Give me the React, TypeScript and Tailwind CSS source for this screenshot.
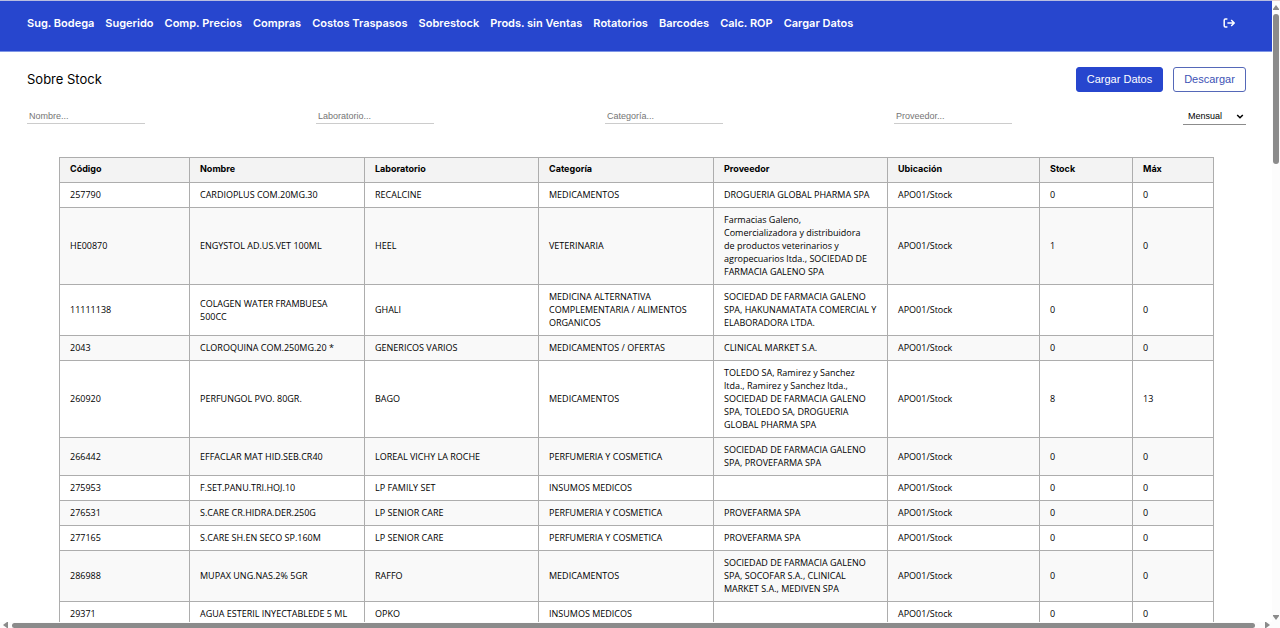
import React from "react";

const navItems = [
  "Sug. Bodega",
  "Sugerido",
  "Comp. Precios",
  "Compras",
  "Costos Traspasos",
  "Sobrestock",
  "Prods. sin Ventas",
  "Rotatorios",
  "Barcodes",
  "Calc. ROP",
  "Cargar Datos",
];

const filters = ["Nombre", "Laboratorio", "Categoría", "Proveedor"];

const columns = [
  { label: "Código", width: "w-[130px]" },
  { label: "Nombre", width: "w-[175px]" },
  { label: "Laboratorio", width: "w-[174px]" },
  { label: "Categoría", width: "w-[175px]" },
  { label: "Proveedor", width: "w-[174px]" },
  { label: "Ubicación", width: "w-[152px]" },
  { label: "Stock", width: "w-[93px]" },
  { label: "Máx", width: "w-[81px]" },
];

const rows = [
  ["257790", "CARDIOPLUS COM.20MG.30", "RECALCINE", "MEDICAMENTOS", "DROGUERIA GLOBAL PHARMA SPA", "APO01/Stock", "0", "0"],
  ["HE00870", "ENGYSTOL AD.US.VET 100ML", "HEEL", "VETERINARIA", "Farmacias Galeno,\nComercializadora y distribuidora\nde productos veterinarios y\nagropecuarios ltda., SOCIEDAD DE\nFARMACIA GALENO SPA", "APO01/Stock", "1", "0"],
  ["11111138", "COLAGEN WATER FRAMBUESA\n500CC", "GHALI", "MEDICINA ALTERNATIVA\nCOMPLEMENTARIA / ALIMENTOS\nORGANICOS", "SOCIEDAD DE FARMACIA GALENO\nSPA, HAKUNAMATATA COMERCIAL Y\nELABORADORA LTDA.", "APO01/Stock", "0", "0"],
  ["2043", "CLOROQUINA COM.250MG.20 *", "GENERICOS VARIOS", "MEDICAMENTOS / OFERTAS", "CLINICAL MARKET S.A.", "APO01/Stock", "0", "0"],
  ["260920", "PERFUNGOL PVO. 80GR.", "BAGO", "MEDICAMENTOS", "TOLEDO SA, Ramirez y Sanchez\nltda., Ramirez y Sanchez ltda.,\nSOCIEDAD DE FARMACIA GALENO\nSPA, TOLEDO SA, DROGUERIA\nGLOBAL PHARMA SPA", "APO01/Stock", "8", "13"],
  ["266442", "EFFACLAR MAT HID.SEB.CR40", "LOREAL VICHY LA ROCHE", "PERFUMERIA Y COSMETICA", "SOCIEDAD DE FARMACIA GALENO\nSPA, PROVEFARMA SPA", "APO01/Stock", "0", "0"],
  ["275953", "F.SET.PANU.TRI.HOJ.10", "LP FAMILY SET", "INSUMOS MEDICOS", "", "APO01/Stock", "0", "0"],
  ["276531", "S.CARE CR.HIDRA.DER.250G", "LP SENIOR CARE", "PERFUMERIA Y COSMETICA", "PROVEFARMA SPA", "APO01/Stock", "0", "0"],
  ["277165", "S.CARE SH.EN SECO SP.160M", "LP SENIOR CARE", "PERFUMERIA Y COSMETICA", "PROVEFARMA SPA", "APO01/Stock", "0", "0"],
  ["286988", "MUPAX UNG.NAS.2% 5GR", "RAFFO", "MEDICAMENTOS", "SOCIEDAD DE FARMACIA GALENO\nSPA, SOCOFAR S.A., CLINICAL\nMARKET S.A., MEDIVEN SPA", "APO01/Stock", "0", "0"],
  ["29371", "AGUA ESTERIL INYECTABLEDE 5 ML", "OPKO", "INSUMOS MEDICOS", "", "APO01/Stock", "0", "0"],
];

function Header() {
  return (
    <header className="flex h-[52px] shrink-0 items-start justify-between border-t border-b border-t-[#b9bde0] border-b-[#7f96e6] bg-[#2746ce] px-[27px] pt-3.5">
      <nav className="flex gap-[11px] whitespace-nowrap text-[11px] leading-4 font-semibold text-white">
        {navItems.map((item) => (
          <a key={item} href="#">
            {item}
          </a>
        ))}
      </nav>
      <button type="button" aria-label="Cerrar sesión" className="mr-2.5 flex h-4 items-center text-white">
        <svg width="12" height="12" viewBox="0 0 12 12" fill="none" stroke="currentColor" strokeWidth="1.5">
          <path d="M4.4 2H2.4Q1.2 2 1.2 3.2V8.8Q1.2 10 2.4 10H4.4" />
          <path d="M4.4 6H11.2M8.2 3L11.2 6L8.2 9" />
        </svg>
      </button>
    </header>
  );
}

function Filters() {
  return (
    <form className="mt-4 flex items-start justify-between font-['Liberation_Sans',Arial,sans-serif] text-[9px]">
      {filters.map((name) => (
        <input
          key={name}
          aria-label={name}
          placeholder={`${name}...`}
          className="h-4 w-[118px] border-b border-[#cccccc] px-0.5 leading-3 outline-none placeholder:text-[#757575]"
        />
      ))}
      <div className="relative">
        <select
          aria-label="Período"
          defaultValue="Mensual"
          className="h-[17px] w-[63px] appearance-none border-b border-[#8c8c8c] bg-white pl-[5px] leading-3 text-black outline-none"
        >
          <option>Mensual</option>
          <option>Semanal</option>
        </select>
        <svg className="pointer-events-none absolute top-1.5 right-0.5" width="8" height="6" viewBox="0 0 8 6" fill="none" stroke="black" strokeWidth="1.5">
          <path d="M1.2 1L4 3.8L6.8 1" />
        </svg>
      </div>
    </form>
  );
}

function StockTable() {
  return (
    <table className="w-full table-fixed border-collapse text-left text-[9px] leading-[13px] text-black">
      <thead className="bg-[#f3f3f3]">
        <tr>
          {columns.map((c) => (
            <th key={c.label} className={`${c.width} border border-[#adadad] pt-1 pr-1 pb-[7px] pl-2.5 font-bold`}>
              {c.label}
            </th>
          ))}
        </tr>
      </thead>
      <tbody className="font-['Open_Sans','Noto_Sans',sans-serif] font-medium">
        {rows.map((row) => (
          <tr key={row[0]} className="even:bg-[#f9f9f9]">
            {row.map((cell, i) => (
              <td key={i} className="border border-[#adadad] pt-[5px] pr-1 pb-1.5 pl-2.5 whitespace-pre-line">
                {cell}
              </td>
            ))}
          </tr>
        ))}
      </tbody>
    </table>
  );
}

export default function App() {
  return (
    <div className="flex h-screen flex-col overflow-hidden bg-white font-['Inter',sans-serif]">
      <div className="flex min-h-0 flex-1">
        <div className="flex min-w-0 flex-1 flex-col overflow-hidden">
          <Header />
          <main className="pt-[15px] pr-[26px] pl-[27px]">
            <div className="flex items-start justify-between">
              <h1 className="pt-0.5 text-[13px] leading-5">Sobre Stock</h1>
              <div className="flex gap-2.5 font-['Liberation_Sans',Arial,sans-serif] text-[11px]">
                <button type="button" className="h-[25px] w-[87px] rounded-[3px] border border-[#2746ce] bg-[#2746ce] text-white">
                  Cargar Datos
                </button>
                <button type="button" className="h-[25px] w-[73px] rounded-[3px] border border-[#5568b8] bg-white text-[#3d52b5]">
                  Descargar
                </button>
              </div>
            </div>
            <Filters />
            <div className="mt-8 px-8">
              <StockTable />
            </div>
          </main>
        </div>
        <div aria-hidden="true" className="flex w-2 shrink-0 flex-col items-center justify-between border-t border-[#e8d4d0] bg-[#fcfcfc] pt-1 pb-0.5">
          <div className="flex flex-col items-center gap-1">
            <svg width="6" height="5" viewBox="0 0 6 5" fill="#8a8a8a">
              <path d="M3 0L6 4V5H0V4Z" />
            </svg>
            <span className="h-[150px] w-1.5 rounded-full bg-[#8b8b8b]" />
          </div>
          <svg width="6" height="5" viewBox="0 0 6 5" fill="#8a8a8a">
            <path d="M0 0H6V1L3 5L0 1Z" />
          </svg>
        </div>
      </div>
      <div aria-hidden="true" className="flex h-1.5 shrink-0 items-center gap-1 bg-[#fcfcfc] pr-2.5 pl-[3px]">
        <svg width="5" height="6" viewBox="0 0 5 6" fill="#8a8a8a">
          <path d="M5 0V6H4L0 3L4 0Z" />
        </svg>
        <span className="mr-1.5 h-[5px] flex-1 rounded-full bg-[#8b8b8b]" />
        <svg width="5" height="6" viewBox="0 0 5 6" fill="#8a8a8a">
          <path d="M0 0V6H1L5 3L1 0Z" />
        </svg>
      </div>
    </div>
  );
}
